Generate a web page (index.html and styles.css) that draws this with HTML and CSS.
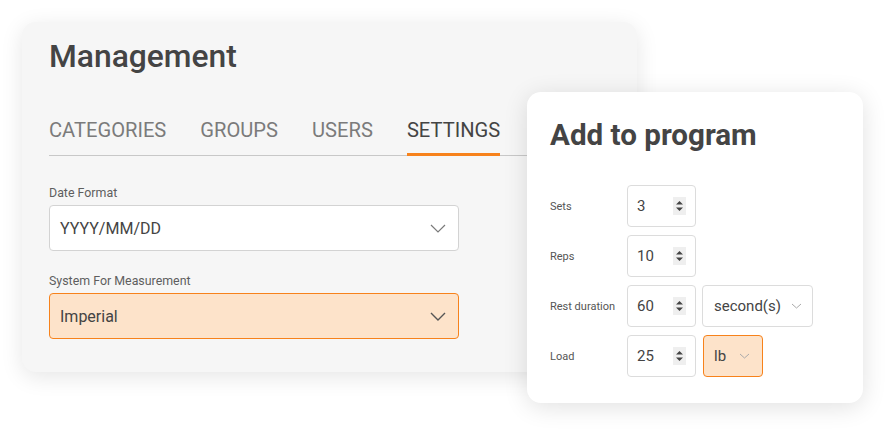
FILE: index.html
```html
<!DOCTYPE html>
<html lang="en">
<head>
<meta charset="utf-8">
<title>Management</title>
<link rel="stylesheet" href="styles.css">
</head>
<body>
<div class="stage">
  <section class="card management">
    <h1 class="title">Management</h1>
    <nav class="tabs">
      <span class="tab">CATEGORIES</span>
      <span class="tab">GROUPS</span>
      <span class="tab">USERS</span>
      <span class="tab active">SETTINGS</span>
    </nav>
    <div class="field first">
      <label class="field-label">Date Format</label>
      <div class="select">
        <span>YYYY/MM/DD</span>
        <svg class="chev" width="16" height="9" viewBox="0 0 16 9"><polyline points="1,1 8,8 15,1" fill="none" stroke="#7a7a7a" stroke-width="1.2"/></svg>
      </div>
    </div>
    <div class="field">
      <label class="field-label">System For Measurement</label>
      <div class="select highlight">
        <span>Imperial</span>
        <svg class="chev" width="16" height="9" viewBox="0 0 16 9"><polyline points="1,1 8,8 15,1" fill="none" stroke="#555" stroke-width="1.4"/></svg>
      </div>
    </div>
  </section>

  <section class="card program">
    <h2 class="program-title">Add to program</h2>
    <div class="form">
      <span class="row-label">Sets</span>
      <div class="num"><span>3</span><svg class="spin" width="13" height="18" viewBox="0 0 13 18"><path d="M3 7.5 L6.5 4 L10 7.5 Z M3 10.5 L6.5 14 L10 10.5 Z" fill="#444"/></svg></div>
      <span></span>

      <span class="row-label">Reps</span>
      <div class="num"><span>10</span><svg class="spin" width="13" height="18" viewBox="0 0 13 18"><path d="M3 7.5 L6.5 4 L10 7.5 Z M3 10.5 L6.5 14 L10 10.5 Z" fill="#444"/></svg></div>
      <span></span>

      <span class="row-label">Rest duration</span>
      <div class="num"><span>60</span><svg class="spin" width="13" height="18" viewBox="0 0 13 18"><path d="M3 7.5 L6.5 4 L10 7.5 Z M3 10.5 L6.5 14 L10 10.5 Z" fill="#444"/></svg></div>
      <div class="mini-select seconds"><span>second(s)</span><svg width="11" height="6" viewBox="0 0 11 6"><polyline points="1,1 5.5,5 10,1" fill="none" stroke="#aaa" stroke-width="1"/></svg></div>

      <span class="row-label">Load</span>
      <div class="num"><span>25</span><svg class="spin" width="13" height="18" viewBox="0 0 13 18"><path d="M3 7.5 L6.5 4 L10 7.5 Z M3 10.5 L6.5 14 L10 10.5 Z" fill="#444"/></svg></div>
      <div class="mini-select unit highlight"><span>lb</span><svg width="11" height="6" viewBox="0 0 11 6"><polyline points="1,1 5.5,5 10,1" fill="none" stroke="#aaa" stroke-width="1"/></svg></div>
    </div>
  </section>
</div>
</body>
</html>
```

FILE: styles.css
```css
* { box-sizing: border-box; }

html, body {
  margin: 0;
  padding: 0;
  background: #ffffff;
  font-family: Roboto, "Liberation Sans", Arial, sans-serif;
  color: #444;
}

.stage {
  position: relative;
  width: 889px;
  height: 429px;
  overflow: hidden;
}

.card {
  border-radius: 14px;
}

.management {
  margin: 22px 0 0 22px;
  width: 615px;
  padding: 16px 27px 33px;
  background: #f6f6f6;
  box-shadow: 0 5px 22px rgba(0, 0, 0, 0.1);
}

.title {
  margin: 0;
  font-size: 31.8px;
  line-height: 36px;
  font-weight: 500;
  color: #444;
}

.tabs {
  display: flex;
  gap: 34px;
  margin-top: 44px;
  border-bottom: 1px solid #c8c8c8;
}

.tab {
  font-size: 20.15px;
  line-height: 24px;
  color: #7b7b7b;
  padding-bottom: 11px;
  border-bottom: 3px solid transparent;
  margin-bottom: -1px;
}

.tab.active {
  color: #444;
  border-bottom-color: #f7821b;
}

.field.first { margin-top: 29px; }
.field + .field { margin-top: 22px; }

.field-label {
  display: block;
  font-size: 12.4px;
  line-height: 16px;
  font-weight: 400;
  color: #5e5e5e;
  margin-bottom: 4px;
}

.select {
  width: 410px;
  height: 46px;
  display: flex;
  align-items: center;
  justify-content: space-between;
  padding: 0 12px 0 10px;
  background: #fff;
  border: 1px solid #d3d3d3;
  border-radius: 4px;
  font-size: 16px;
  color: #444;
}

.select.highlight {
  background: #fde3ca;
  border-color: #f7821b;
}

.program {
  position: absolute;
  left: 527px;
  top: 92px;
  width: 336px;
  padding: 25px 23px 26px;
  background: #fff;
  box-shadow: 0 4px 24px rgba(0, 0, 0, 0.12);
}

.program-title {
  margin: 0;
  font-size: 29.6px;
  line-height: 36px;
  font-weight: 700;
  color: #444;
}

.form {
  margin-top: 32px;
  display: grid;
  grid-template-columns: 77px 69px auto;
  grid-auto-rows: 42px;
  row-gap: 8px;
  align-items: center;
}

.row-label {
  font-size: 11px;
  font-weight: 400;
  color: #555;
}

.num {
  height: 42px;
  width: 69px;
  display: flex;
  align-items: center;
  justify-content: space-between;
  padding: 0 9px 0 9px;
  border: 1px solid #dcdcdc;
  border-radius: 4px;
  font-size: 15px;
  color: #444;
}

.spin {
  background: #efefef;
  display: block;
}

.mini-select {
  height: 42px;
  display: flex;
  align-items: center;
  justify-content: space-between;
  padding: 0 10px 0 11px;
  margin-left: 6px;
  border: 1px solid #dcdcdc;
  border-radius: 4px;
  font-size: 15px;
  color: #444;
  justify-self: start;
}

.mini-select.seconds { width: 111px; }
.mini-select.unit { width: 60px; margin-left: 7px; padding-left: 10px; padding-right: 12px; }

.mini-select.highlight {
  background: #fde3ca;
  border-color: #f7821b;
}
```
